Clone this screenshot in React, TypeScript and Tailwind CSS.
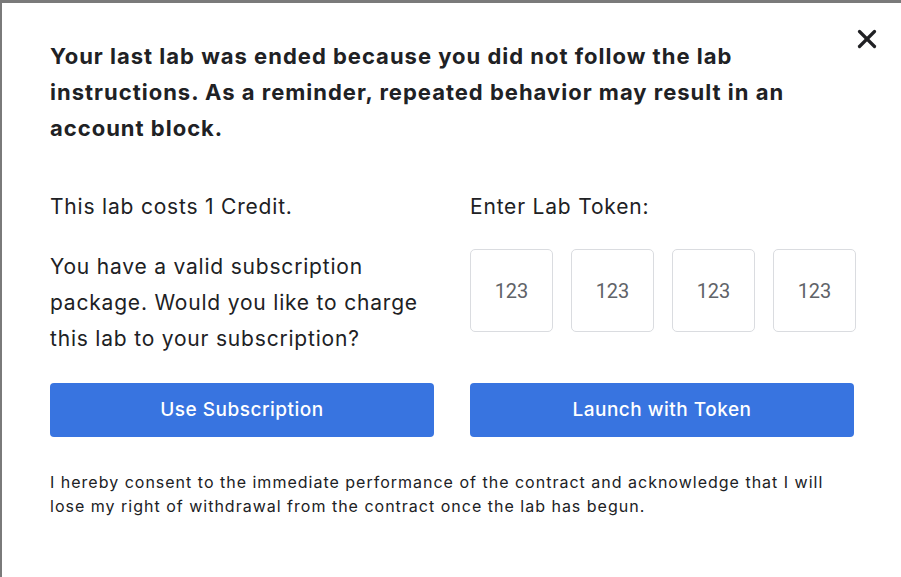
import { X } from 'lucide-react';

export default function App() {
  return (
    <div className="w-[901px] h-[577px] bg-[#7a7a7a] overflow-hidden" style={{ fontFamily: 'Inter, "Noto Sans", sans-serif' }}>
      <div className="ml-[2px] mt-[3px] h-[574px] bg-white relative text-[#202124]">
        <button className="absolute right-[19px] top-[21px] text-[#202124]">
          <X className="w-[30px] h-[30px]" strokeWidth={2.6} />
        </button>

        <div className="pl-[48px] pr-[47px] pt-[35px]">
          <h1 className="text-[22px] leading-[36px] font-bold pr-[50px] tracking-[1px]">
            Your last lab was ended because you did not follow the lab instructions. As a reminder, repeated behavior may result in an account block.
          </h1>

          <div className="grid grid-cols-2 gap-[36px] mt-[43px]">
            {/* Subscription */}
            <div className="flex flex-col">
              <p className="text-[21px] leading-[36px] tracking-[0.8px]">This lab costs 1 Credit.</p>
              <p className="text-[21px] leading-[36px] tracking-[0.8px] mt-[24px]">
                You have a valid subscription package. Would you like to charge this lab to your subscription?
              </p>
              <button className="mt-[26px] h-[54px] rounded-[4px] bg-[#3874e0] text-white text-[19px] font-medium tracking-[0.5px]">
                Use Subscription
              </button>
            </div>

            {/* Token */}
            <div className="flex flex-col">
              <p className="text-[21px] leading-[36px] tracking-[0.8px]">Enter Lab Token:</p>
              <div className="flex gap-[18px] mt-[24px]">
                {[0, 1, 2, 3].map((i) => (
                  <input
                    key={i}
                    placeholder="123"
                    className="w-[83px] h-[83px] border border-[#dadce0] rounded-[5px] text-center text-[20px] text-[#3c4043] placeholder:text-[#5f6368] outline-none"
                    style={{ fontFamily: 'Roboto, sans-serif' }}
                  />
                ))}
              </div>
              <button className="mt-[51px] h-[54px] rounded-[4px] bg-[#3874e0] text-white text-[19px] font-medium tracking-[0.5px]">
                Launch with Token
              </button>
            </div>
          </div>

          <p className="mt-[33px] text-[16px] leading-[24px] pr-[20px] tracking-[1px]">
            I hereby consent to the immediate performance of the contract and acknowledge that I will lose my right of withdrawal from the contract once the lab has begun.
          </p>
        </div>
      </div>
    </div>
  );
}
